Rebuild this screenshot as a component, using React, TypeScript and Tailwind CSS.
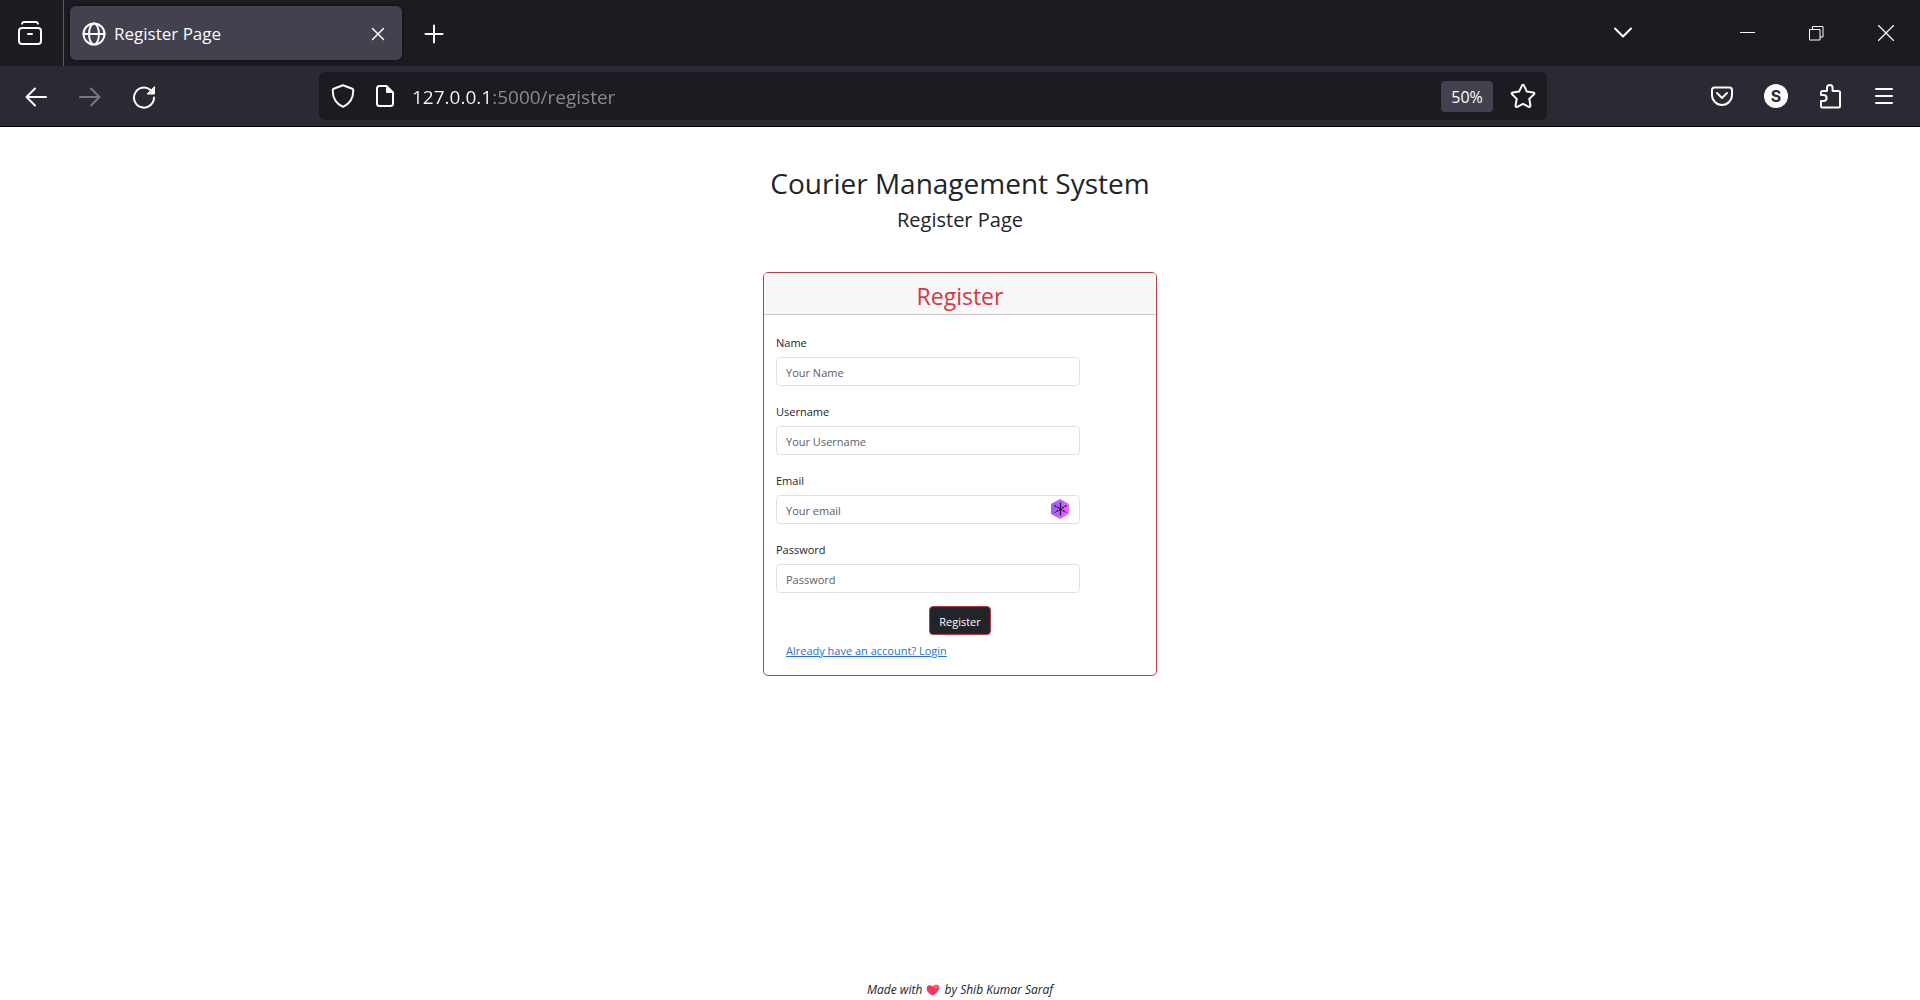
import React from "react";

type IconProps = { size?: number; sw?: number; children: React.ReactNode };

function Icon({ size = 24, sw = 2, children }: IconProps) {
  return (
    <svg
      width={size}
      height={size}
      viewBox={`0 0 ${size} ${size}`}
      fill="none"
      stroke="currentColor"
      strokeWidth={sw}
      strokeLinecap="round"
      strokeLinejoin="round"
      aria-hidden="true"
      className="shrink-0"
    >
      {children}
    </svg>
  );
}

function ToolButton({ label, className, children }: { label: string; className: string; children: React.ReactNode }) {
  return (
    <button type="button" aria-label={label} className={`flex shrink-0 items-center justify-center ${className}`}>
      {children}
    </button>
  );
}

function TabStrip() {
  return (
    <div className="flex h-[66px] items-center bg-[#1c1b22]">
      <ToolButton label="View recent browsing" className="w-[60px]">
        <Icon>
          <rect x="1" y="7" width="22" height="16" rx="3" />
          <path d="M4 2.6C4.400 1.600 5 1 6 1h12c1 0 1.600 .6 2 1.600M10 13h4" />
        </Icon>
      </ToolButton>
      <div className="ml-[3px] h-full w-px bg-[#5b5b66]" />
      <div className="ml-1.5 flex h-[54px] w-[332px] items-center rounded-md bg-[#42414d] pt-px pr-1 pl-3 shadow-[0_0_4px_rgba(0,0,0,0.5)]">
        <Icon>
          <circle cx="12" cy="12" r="10.500" />
          <ellipse cx="12" cy="12" rx="5" ry="10.500" />
          <path d="M1.500 12h21" />
        </Icon>
        <span className="ml-2 flex-1 text-[17px] leading-6">Register Page</span>
        <ToolButton label="Close tab" className="w-10">
          <Icon size={14} sw={1.5}>
            <path d="M1.500 1.500l11 11M12.500 1.500l-11 11" />
          </Icon>
        </ToolButton>
      </div>
      <ToolButton label="New tab" className="ml-1 w-14 pt-0.5">
        <Icon size={20} sw={2}>
          <path d="M10 1.500v17M1.500 10h17" />
        </Icon>
      </ToolButton>
      <div className="flex-1" />
      <ToolButton label="List all tabs" className="mr-[63px] w-[54px]">
        <Icon size={20} sw={2}>
          <path d="M2 5.500l8 8 8-8" />
        </Icon>
      </ToolButton>
      <ToolButton label="Minimize" className="w-[69px]">
        <svg width="16" height="16" aria-hidden="true" className="shrink-0">
          <path d="M0 7.500h15" stroke="currentColor" />
        </svg>
      </ToolButton>
      <ToolButton label="Restore" className="w-[69px]">
        <svg width="15" height="15" fill="none" stroke="currentColor" aria-hidden="true" className="shrink-0">
          <path d="M.5 3.500h10.500v10.500H.5zM3.500 3.500V.5h10.500v10.500h-3" />
        </svg>
      </ToolButton>
      <ToolButton label="Close window" className="w-[69px]">
        <Icon size={16} sw={1.2}>
          <path d="M.5 .5l15 15M15.500 .5l-15 15" />
        </Icon>
      </ToolButton>
    </div>
  );
}

function Toolbar() {
  return (
    <div className="flex h-[61px] items-center border-b border-black bg-[#2b2a33]">
      <nav aria-label="History" className="flex w-[319px] shrink-0 pt-0.5 pl-[9px]">
        <ToolButton label="Back" className="w-[54px]">
          <Icon size={22} sw={2}>
            <path d="M21 11H2M10 2.500L1.500 11l8.500 8.500" />
          </Icon>
        </ToolButton>
        <ToolButton label="Forward" className="w-[54px] text-[#78777e]">
          <Icon size={22} sw={2}>
            <path d="M1 11h19M12 2.500l8.500 8.500-8.500 8.500" />
          </Icon>
        </ToolButton>
        <ToolButton label="Reload" className="w-[54px]">
          <Icon size={24} sw={2}>
            <path d="M22 12.500A10 10 0 1 1 18.500 5" />
            <path d="M22.500 2v7h-7z" fill="currentColor" strokeWidth="1" />
          </Icon>
        </ToolButton>
      </nav>
      <div className="flex h-12 min-w-0 flex-1 items-center rounded-md bg-[#1c1b22] px-[3px]">
        <ToolButton label="Tracking protection" className="w-[42px]">
          <Icon size={24} sw={2}>
            <path d="M12 1.200L21.300 4.700C22 5 22.300 5.500 22.300 6.200C22.300 13 19.500 19.500 12 22.800C4.500 19.500 1.700 13 1.700 6.200C1.700 5.500 2 5 2.700 4.700Z" />
          </Icon>
        </ToolButton>
        <ToolButton label="Site information" className="w-[42px]">
          <Icon size={24} sw={2}>
            <path d="M13.500 2H6.500a2.500 2.500 0 0 0-2.500 2.500v15A2.500 2.500 0 0 0 6.500 22h11a2.500 2.500 0 0 0 2.500-2.500V8.500z" />
            <path d="M13.500 2v6.500h6.500z" fill="currentColor" strokeWidth="1" />
          </Icon>
        </ToolButton>
        <input
          aria-label="Address"
          defaultValue="127.0.0.1:5000/register"
          className="ml-1.5 min-w-0 flex-1 bg-linear-to-r from-[#fbfbfe] from-[81px] to-[#8c8c92] to-[81px] bg-clip-text pt-0.5 text-[19px] leading-7 text-transparent outline-none"
        />
        <button type="button" className="h-[31px] w-[52px] rounded-sm bg-[#42414d] pt-0.5 text-base leading-6">
          50%
        </button>
        <ToolButton label="Bookmark this page" className="ml-[9px] w-[42px]">
          <Icon size={26} sw={2}>
            <path d="M12 2.600Q13 .8 14 2.600L16.900 8.600 23.300 9.500Q25.200 9.900 24 11.300L19.300 15.900 20.400 22.500Q20.500 24.500 18.800 23.900L13 20.800 7.200 23.900Q5.500 24.500 5.600 22.500L6.700 15.900 2 11.300Q.8 9.900 2.700 9.500L9.100 8.600Z" />
          </Icon>
        </ToolButton>
      </div>
      <div className="flex w-[373px] shrink-0 justify-end pr-[9px]">
        <ToolButton label="Save to Pocket" className="w-[54px]">
          <Icon size={24} sw={2}>
            <path d="M4.500 3.500h15a2.500 2.500 0 0 1 2.500 2.500v5a10 10 0 0 1-20 0V6a2.500 2.500 0 0 1 2.500-2.500z" />
            <path d="M7 9l5 5 5-5" />
          </Icon>
        </ToolButton>
        <ToolButton label="Account" className="w-[54px]">
          <span className="flex size-6 items-center justify-center rounded-full bg-[#fbfbfe] font-[Inter] text-base font-bold text-[#2b2a33]">
            S
          </span>
        </ToolButton>
        <ToolButton label="Extensions" className="w-[54px]">
          <Icon size={26} sw={2}>
            <path d="M4 12V9.500a1.500 1.500 0 0 1 1.500-1.500H10V4.800a2.800 2.800 0 0 1 5.600 0V8h5.900a1.500 1.500 0 0 1 1.500 1.500v13.500a1.500 1.500 0 0 1-1.500 1.500H5.500a1.500 1.500 0 0 1-1.500-1.500V18h2.600a3 3 0 0 0 0-6z" />
          </Icon>
        </ToolButton>
        <ToolButton label="Menu" className="w-[54px]">
          <Icon size={20} sw={2}>
            <path d="M2 3h16M2 10h16M2 17h16" />
          </Icon>
        </ToolButton>
      </div>
    </div>
  );
}

function AutofillBadge() {
  return (
    <svg
      width="18"
      height="20"
      viewBox="0 0 18 20"
      role="img"
      aria-label="Email mask"
      className="absolute top-1 right-[11px]"
    >
      <defs>
        <linearGradient id="badge" x1="0" y1="0" x2="1" y2="0.300">
          <stop offset="0" stopColor="#8b5cf6" />
          <stop offset="1" stopColor="#e667f5" />
        </linearGradient>
      </defs>
      <path d="M9 0l9 5v10l-9 5-9-5V5z" fill="url(#badge)" />
      <path d="M9.500 3.500v13" stroke="#2a0a4a" strokeWidth="1.300" />
      <path d="M3.500 6.500l12 7M15.500 6.500l-12 7" stroke="#2a0a4a" strokeWidth="1.300" strokeDasharray="2.200 1" />
    </svg>
  );
}

const fields = [
  { id: "name", label: "Name", type: "text", placeholder: "Your Name" },
  { id: "username", label: "Username", type: "text", placeholder: "Your Username" },
  { id: "email", label: "Email", type: "email", placeholder: "Your email" },
  { id: "password", label: "Password", type: "password", placeholder: "Password" },
];

function RegisterCard() {
  return (
    <section className="mx-auto mt-10 w-full max-w-[394px] overflow-hidden rounded-[5px] border border-[#b8404e]">
      <h2 className="border-b border-[#c8c8c8] bg-[#f8f8f8] pt-[7px] pb-0.5 text-center text-[23px] leading-8 text-[#dc3545]">
        Register
      </h2>
      <form className="px-3 pt-[18px] pb-3.5" onSubmit={(e) => e.preventDefault()}>
        <div className="flex flex-col gap-4">
          {fields.map((f) => (
            <div key={f.id}>
              <label htmlFor={f.id} className="block pb-1 text-[11px] leading-5">
                {f.label}
              </label>
              <div className="relative w-[304px] max-w-full">
                <input
                  id={f.id}
                  type={f.type}
                  placeholder={f.placeholder}
                  className="block h-[29px] w-full rounded-sm border border-[#dee2e6] px-[9px] pt-0.5 text-[11px] placeholder:text-[#5c6066]"
                />
                {f.id === "email" && <AutofillBadge />}
              </div>
            </div>
          ))}
        </div>
        <button
          type="submit"
          className="mx-auto mt-[13px] block h-[29px] w-[62px] rounded-sm border border-[#b8404e] bg-[#212529] pt-0.5 text-[11px] leading-4 text-white"
        >
          Register
        </button>
        <a href="#login" className="mt-1.5 ml-2.5 inline-block align-top text-[11px] leading-5 text-[#2a6fdb] underline">
          Already have an account? Login
        </a>
      </form>
    </section>
  );
}

export default function App() {
  return (
    <div className="flex min-h-screen flex-col bg-white font-['Open_Sans',sans-serif] text-[#212529]">
      <header className="text-[#fbfbfe]">
        <TabStrip />
        <Toolbar />
      </header>
      <main className="flex-1 px-4 pt-[38px]">
        <h1 className="text-center text-[28px] leading-9">Courier Management System</h1>
        <p className="mt-[7px] text-center text-xl leading-6">Register Page</p>
        <RegisterCard />
      </main>
      <footer className="text-center text-xs leading-5 italic">
        Made with{" "}
        <svg width="14" height="12" viewBox="0 0 14 12" role="img" aria-label="love" className="mx-px inline-block align-[-2px]">
          <path
            d="M6.500 11.500C3 10 .3 7 .7 4C1 1.500 4 .2 6.600 2.600C8.500 .2 12.500 0 13.300 2.700C14 6 10 10 6.500 11.500z"
            fill="#f2365f"
          />
          <path d="M7 2.600C8.500 .5 12 .3 13 2.500C12 5 9 6 7 2.600z" fill="#f9646b" />
        </svg>{" "}
        by Shib Kumar Saraf
      </footer>
    </div>
  );
}
